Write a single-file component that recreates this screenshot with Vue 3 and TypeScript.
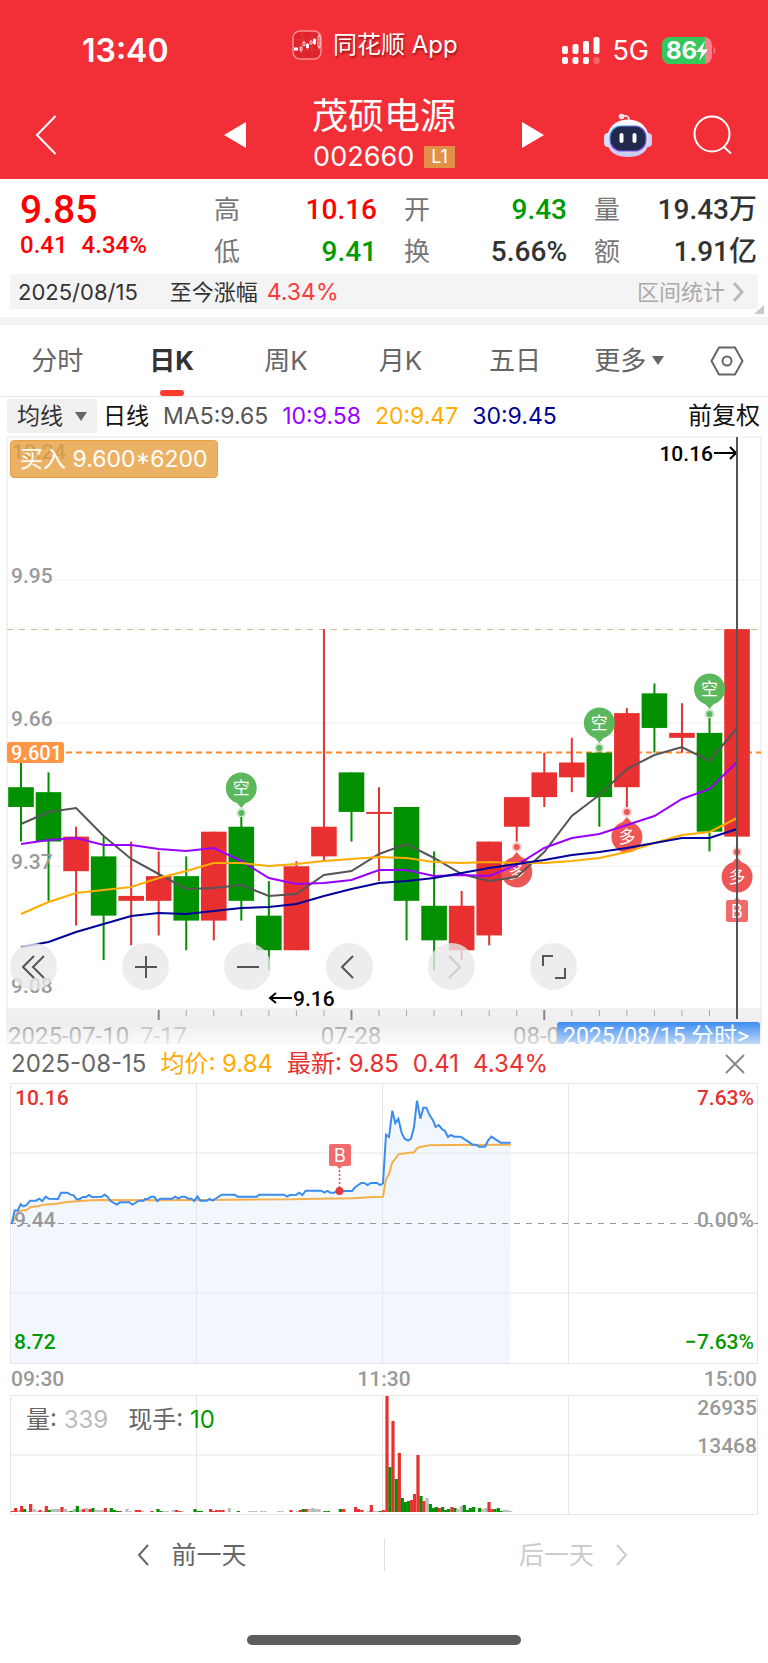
<script setup lang="ts">
type Point = [number, number]
type Candle = [open: number, close: number, high: number, low: number]

const quotes = [
  { label: '高', value: '10.16', tone: 'up' },
  { label: '开', value: '9.43', tone: 'down' },
  { label: '量', value: '19.43万', tone: '' },
  { label: '低', value: '9.41', tone: 'down' },
  { label: '换', value: '5.66%', tone: '' },
  { label: '额', value: '1.91亿', tone: '' },
]

const tabs = ['分时', '日K', '周K', '月K', '五日']

const averages = [
  { text: 'MA5:9.65', tone: 'ma5' },
  { text: '10:9.58', tone: 'ma10' },
  { text: '20:9.47', tone: 'ma20' },
  { text: '30:9.45', tone: 'ma30' },
]

// Daily candles
const candles: Candle[] = [
  [9.53, 9.49, 9.58, 9.42], [9.52, 9.42, 9.56, 9.3], [9.36, 9.43, 9.45, 9.25],
  [9.39, 9.27, 9.43, 9.18], [9.3, 9.31, 9.42, 9.21], [9.3, 9.35, 9.4, 9.23],
  [9.35, 9.26, 9.39, 9.2], [9.26, 9.44, 9.44, 9.22], [9.45, 9.3, 9.47, 9.26],
  [9.27, 9.2, 9.34, 9.16], [9.2, 9.37, 9.38, 9.2], [9.39, 9.45, 9.85, 9.38],
  [9.56, 9.48, 9.56, 9.42], [9.48, 9.48, 9.53, 9.34], [9.49, 9.3, 9.49, 9.22],
  [9.29, 9.22, 9.4, 9.16], [9.2, 9.29, 9.32, 9.18], [9.23, 9.42, 9.42, 9.21],
  [9.45, 9.51, 9.51, 9.42], [9.51, 9.56, 9.6, 9.49], [9.55, 9.58, 9.63, 9.52],
  [9.6, 9.51, 9.6, 9.45], [9.53, 9.68, 9.69, 9.49], [9.72, 9.65, 9.74, 9.6],
  [9.63, 9.64, 9.7, 9.6], [9.64, 9.44, 9.67, 9.4], [9.43, 9.85, 10.16, 9.41],
]
const cx = (i: number) => 21 + i * 27.54
const py = (price: number) => 288 + (9.66 - price) * 494
const bars = candles.map(([open, close, high, low], i) => {
  const top = py(Math.max(open, close))
  return {
    x: cx(i),
    top,
    height: Math.max(2, py(Math.min(open, close)) - top),
    high: py(high),
    low: py(low),
    tone: close >= open ? 'rise' : 'fall',
  }
})

const line = (ys: number[]) => ys.map((y, i) => `${cx(i)},${y}`).join(' ')
const maLines = [
  { tone: 'ma5', points: line([389, 377, 373, 401, 424, 439, 454, 453, 450, 461, 459, 440, 436, 419, 409, 423, 439, 446, 442, 417, 381, 360, 334, 320, 312, 326, 293]) },
  { tone: 'ma10', points: line([409, 405, 403, 410, 410, 414, 416, 413, 426, 443, 449, 448, 445, 435, 435, 441, 440, 441, 430, 413, 403, 399, 390, 381, 364, 354, 327]) },
  { tone: 'ma20', points: line([479, 467, 458, 455, 452, 443, 436, 428, 428, 431, 429, 426, 424, 422, 423, 427, 428, 427, 428, 428, 426, 423, 417, 408, 400, 397, 383]) },
  { tone: 'ma30', points: line([512, 507, 497, 489, 481, 478, 479, 476, 473, 472, 469, 461, 454, 448, 446, 443, 438, 433, 429, 425, 420, 417, 413, 408, 403, 403, 394]) },
]

const shortPins = [{ i: 8, y: 353 }, { i: 21, y: 288 }, { i: 25, y: 254 }]
const longPins = [{ i: 18, y: 437 }, { i: 22, y: 402 }, { i: 26, y: 442 }]
const ticks = Array.from({ length: 21 }, (_, k) => k + 5)

// Intraday series, three units to a pixel
const price: Point[] = [
  [35, 553], [44, 512], [53, 513], [62, 494], [71, 500], [80, 496], [90, 483], [108, 483], [118, 477], [127, 484],
  [137, 471], [146, 477], [174, 478], [183, 459], [202, 459], [212, 465], [221, 467], [230, 479], [239, 478],
  [248, 472], [258, 472], [267, 466], [276, 472], [305, 471], [314, 465], [323, 472], [332, 484], [350, 495],
  [360, 488], [388, 488], [397, 495], [406, 490], [416, 483], [430, 483], [435, 478], [445, 477], [453, 471],
  [463, 471], [472, 484], [481, 477], [516, 477], [526, 471], [535, 477], [545, 471], [555, 471], [565, 477],
  [574, 477], [583, 484], [592, 470], [601, 483], [620, 483], [629, 478], [638, 483], [665, 465], [704, 465],
  [713, 471], [770, 471], [778, 465], [852, 465], [861, 471], [870, 466], [889, 465], [898, 459], [907, 466],
  [917, 453], [964, 453], [973, 459], [982, 454], [991, 459], [1003, 459], [1012, 454], [1056, 454], [1067, 441],
  [1084, 430], [1093, 430], [1103, 436], [1112, 430], [1131, 430], [1140, 436], [1149, 431], [1158, 285],
  [1167, 292], [1177, 213], [1186, 250], [1195, 237], [1205, 280], [1214, 297], [1224, 303], [1233, 297],
  [1242, 262], [1251, 183], [1261, 237], [1270, 204], [1279, 204], [1289, 227], [1298, 240], [1307, 262],
  [1316, 256], [1326, 268], [1335, 274], [1344, 292], [1353, 286], [1363, 291], [1382, 291], [1400, 303],
  [1418, 315], [1428, 315], [1438, 321], [1455, 321], [1464, 303], [1474, 291], [1502, 309], [1532, 309],
]
const average: Point[] = [
  [35, 553], [44, 537], [55, 514], [80, 511], [92, 502], [118, 499], [130, 495], [170, 492], [200, 487],
  [240, 484], [290, 481], [480, 482], [700, 480], [880, 479], [950, 477], [1060, 476], [1120, 472], [1149, 471],
  [1158, 418], [1167, 403], [1177, 368], [1186, 358], [1195, 344], [1205, 342], [1242, 338], [1251, 326],
  [1261, 322], [1289, 317], [1344, 316], [1532, 315],
]
const poly = (pts: Point[]) => pts.map(([x, y]) => `${x / 3},${(y - 130) / 3}`).join(' ')
const pricePoints = poly(price)
const averagePoints = poly(average)
const areaPoints = `${pricePoints} 510,280 11,280`

// Volume bars: r = rise, g = fall, n = flat; then position and height
const volume = (
  'r37:1 r47:4 n56:2 r65:6 g74:3 n84:1 r92:8 n102:3 n111:1 r120:2 n130:1 r139:6 g148:2 n158:3 n167:3 n176:3 r186:5 n196:3 ' +
  'n204:1 g214:1 n223:3 g232:6 n242:2 r251:3 n260:4 r270:3 g279:4 n288:2 n297:2 n306:2 r316:4 n325:1 g334:4 g343:2 g352:1 ' +
  'r361:1 n381:3 n391:1 r409:2 r419:2 n428:1 r456:1 g474:3 g483:1 n492:1 n502:1 n520:2 r530:2 r540:1 n548:1 g585:3 g595:1 ' +
  'g604:1 r632:3 r641:1 r650:2 r660:2 r669:2 n688:4 g715:1 n750:1 n759:1 n768:1 n785:1 n795:1 n836:1 n846:1 r873:2 n892:1 ' +
  'r901:2 g910:3 r919:3 n928:3 n938:4 n947:3 n957:3 g975:1 g985:1 g1021:3 r1031:3 r1067:5 r1076:3 r1086:2 n1105:1 r1114:7 ' +
  'n1123:1 n1133:1 g1142:1 r1151:2 r1161:116 g1170:45 r1179:91 g1189:33 r1198:59 g1207:14 g1216:10 g1226:11 r1235:12 ' +
  'r1244:18 r1254:57 g1263:16 r1272:11 n1281:14 g1291:8 g1300:4 g1309:5 r1318:4 g1328:5 g1337:2 g1346:3 r1356:5 g1365:4 ' +
  'n1374:3 n1384:6 g1393:7 g1402:2 g1411:4 g1421:5 g1439:4 n1448:3 n1458:4 r1467:10 r1476:3 g1485:3 g1495:4 g1504:1 ' +
  'n1513:2 n1522:2 n1532:1'
).split(' ').map((item) => {
  const [x, h] = item.slice(1).split(':').map(Number)
  return { tone: item[0], x: x / 3 - 1.6, h }
})
</script>

<template>
  <main class="page">
    <header class="top">
      <div class="status">
        <time class="clock">13:40</time>
        <div class="source">
          <svg class="app-icon" viewBox="0 0 30 30" aria-hidden="true">
            <rect x="1" y="1" width="28" height="28" rx="7" fill="#e0242b" stroke="#fb9095" stroke-width="1.5" />
            <path d="M1 10h28M1 20h28M10 1v28M20 1v28" stroke="#ef4a50" stroke-width=".5" />
            <path d="M2 17.500h4v3H2zM14 14h3v4h-3zM21 9h3v5h-3z" fill="#fff" />
            <path d="M8 17h2v3H8zM11 12.500h2v3h-2zM18 11h2v3h-2zM26 6h2v11h-2zM9 20v2M12 11v1M15.500 13v6M22.500 8v7M27 4v2M27 17v2" fill="none" stroke="#fff" stroke-width=".8" />
          </svg>
          <span>同花顺 App</span>
        </div>
        <div class="signals">
          <svg class="bars" viewBox="0 0 38 28" aria-hidden="true">
            <g fill="#fff">
              <rect x="0" y="9" width="6" height="8" rx="2" /><rect x="10.500" y="7" width="6" height="10" rx="2" />
              <rect x="21" y="4" width="6" height="13" rx="2" /><rect x="31.500" y="0" width="6" height="17" rx="2" />
              <rect x="0" y="20" width="6" height="7" rx="2" /><rect x="10.500" y="20" width="6" height="7" rx="2" />
              <rect x="21" y="20" width="6" height="7" rx="2" /><rect x="31.500" y="20" width="6" height="7" rx="2" opacity=".25" />
            </g>
          </svg>
          <span class="network">5G</span>
          <svg class="battery" viewBox="0 0 54 28" role="img" aria-label="86">
            <path d="M8 0h34a8 8 0 0 1 8 8v11a8 8 0 0 1-8 8H8a8 8 0 0 1-8-8V8a8 8 0 0 1 8-8z" fill="#f9808a" />
            <path d="M8 0h35v27H8a8 8 0 0 1-8-8V8a8 8 0 0 1 8-8z" fill="#34c759" />
            <path d="M51.500 9.500c2.500 1.500 2.500 6.500 0 8z" fill="#f9707a" />
            <text x="4" y="22" class="battery-text">86</text>
            <path d="M43 4 34 15h5.500L37 24l9-11.500h-5.500z" fill="#fff" />
          </svg>
        </div>
      </div>
      <nav class="nav">
        <button class="icon-btn back" aria-label="返回">
          <svg viewBox="0 0 22 40"><path d="M20.500 1 2 20l18.500 19" /></svg>
        </button>
        <div class="stock">
          <button class="icon-btn step" aria-label="上一只"><svg viewBox="0 0 22 26"><path d="M22 0v26L0 13z" /></svg></button>
          <div class="title">
            <h1>茂硕电源</h1>
            <p>002660 <span class="level">L1</span></p>
          </div>
          <button class="icon-btn step" aria-label="下一只"><svg viewBox="0 0 22 26"><path d="M0 0v26l22-13z" /></svg></button>
        </div>
        <div class="actions">
          <button class="icon-btn robot" aria-label="助手">
            <svg viewBox="0 0 48 44">
              <defs>
                <linearGradient id="shell" x1="0" y1="0" x2="0" y2="1"><stop offset="0" stop-color="#fff" /><stop offset="1" stop-color="#c9c6f0" /></linearGradient>
                <linearGradient id="rim" x1="0" y1="0" x2="1" y2="1"><stop offset="0" stop-color="#39b8e8" /><stop offset=".5" stop-color="#8b4df0" /><stop offset="1" stop-color="#6f5be8" /></linearGradient>
              </defs>
              <path d="M18 3.500c4-1.500 7-.5 7 4" fill="none" stroke="#f5dfe8" stroke-width="1.600" />
              <circle cx="17.500" cy="3.500" r="2.800" fill="#f3e3ee" />
              <rect x="0" y="20" width="8" height="14" rx="4" fill="#dcdcf8" />
              <rect x="40" y="20" width="8" height="14" rx="4" fill="#d0cef4" />
              <path d="M24 6.500C37 6.500 45 15 45 27c0 11-8 17-21 17S3 38 3 27C3 15 11 6.500 24 6.500z" fill="url(#shell)" />
              <rect x="6" y="13" width="36" height="25" rx="11" fill="#20284c" stroke="url(#rim)" stroke-width="1.200" />
              <rect x="15.500" y="20" width="4" height="10" rx="2" fill="#fff" />
              <rect x="28.500" y="20" width="4" height="10" rx="2" fill="#fff" />
            </svg>
          </button>
          <button class="icon-btn search" aria-label="搜索">
            <svg viewBox="0 0 40 40"><circle cx="19" cy="19" r="17.500" /><path d="m31 32 7 6.500" /></svg>
          </button>
        </div>
      </nav>
    </header>

    <section class="quote">
      <div class="last">
        <strong>9.85</strong>
        <p><span>0.41</span><span>4.34%</span></p>
      </div>
      <dl class="stats">
        <div v-for="q in quotes" :key="q.label">
          <dt>{{ q.label }}</dt>
          <dd :class="q.tone">{{ q.value }}</dd>
        </div>
      </dl>
    </section>

    <section class="range">
      <time>2025/08/15</time>
      <span class="since">至今涨幅</span>
      <span class="change">4.34%</span>
      <a class="range-link" href="#range">区间统计
        <svg viewBox="0 0 12 20" aria-hidden="true"><path d="m2 1 8 9-8 9" /></svg>
      </a>
      <svg class="corner" viewBox="0 0 10 9" aria-hidden="true"><path d="M10 0v9H0z" /></svg>
    </section>

    <nav class="tabs">
      <button v-for="t in tabs" :key="t" :class="{ active: t === '日K' }">{{ t }}</button>
      <button class="more">更多<svg viewBox="0 0 12 9" aria-hidden="true"><path d="M0 0h12L6 9z" /></svg></button>
      <button class="settings" aria-label="设置">
        <svg viewBox="0 0 34 30"><path d="M9 1.500h16L32.500 15 25 28.500H9L1.500 15z" /><circle cx="17" cy="15" r="4.500" /></svg>
      </button>
    </nav>

    <div class="indicators">
      <button class="pill">均线<svg viewBox="0 0 12 9" aria-hidden="true"><path d="M0 0h12L6 9z" /></svg></button>
      <span class="period">日线</span>
      <span v-for="m in averages" :key="m.tone" :class="m.tone">{{ m.text }}</span>
      <button class="adjust">前复权</button>
    </div>

    <section class="daily">
      <svg class="chart" viewBox="0 0 768 609" role="img" aria-label="日K">
        <defs>
          <linearGradient id="axis" x1="0" y1="0" x2="0" y2="1"><stop offset="0" stop-color="#f3f3f3" /><stop offset=".5" stop-color="#ececec" /><stop offset="1" stop-color="#f7f7f7" /></linearGradient>
          <linearGradient id="fade" x1="0" y1="0" x2="0" y2="1"><stop offset="0" stop-color="#fff" stop-opacity="0" /><stop offset="1" stop-color="#fafafa" stop-opacity=".7" /></linearGradient>
        </defs>
        <rect x="7" y="574" width="754" height="35" fill="url(#axis)" />
        <path class="grid" d="M7 145h754M7 288h754M7 431h754" />
        <path class="frame" d="M7 609V2h754v607M7 574h754" />
        <line class="high-line" x1="7" y1="194.500" x2="761" y2="194.500" />
        <line class="cost-line" x1="66" y1="317.500" x2="761" y2="317.500" />

        <g v-for="(b, i) in bars" :key="i" :class="b.tone">
          <rect :x="b.x - 1" :y="b.high" width="2" :height="b.low - b.high" />
          <rect :x="b.x - 12.8" :y="b.top" width="25.600" :height="b.height" />
        </g>

        <g v-for="p in shortPins" :key="p.i" class="pin short" :transform="`translate(${cx(p.i)} ${p.y})`">
          <path d="M-6 13 0 20l6-7z" /><circle r="15.500" />
          <circle cy="25" r="5" class="halo" /><circle cy="25" r="3" />
          <text y="6">空</text>
        </g>
        <g v-for="p in longPins" :key="p.i" class="pin long" :transform="`translate(${cx(p.i)} ${p.y})`">
          <path d="M-6-13 0-20l6 7z" /><circle r="15.500" />
          <circle cy="-25" r="5" class="halo" /><circle cy="-25" r="3" />
          <text y="6">多</text>
        </g>
        <g class="mark">
          <path d="m733 466 4-4 4 4z" /><rect x="726" y="465" width="22" height="22" rx="2" />
          <text x="737" y="483">B</text>
        </g>

        <polyline v-for="m in maLines" :key="m.tone" class="ma" :class="m.tone" :points="m.points" />

        <g class="label">
          <text x="12" y="24">10.24</text>
          <text x="11" y="148">9.95</text>
          <text x="11" y="291">9.66</text>
          <text x="11" y="434">9.37</text>
          <text x="11" y="558">9.08</text>
        </g>
        <rect x="7" y="307" width="57" height="21" rx="3" fill="#ff9545" />
        <text x="11" y="325" class="cost">9.601</text>

        <g class="extreme">
          <text x="713" y="26" text-anchor="end">10.16</text>
          <path d="M714 18h22m-6-6 6 6-6 6" />
          <text x="293" y="571">9.16</text>
          <path d="M292 563h-22m6-5-6 5 6 5" />
        </g>

        <path class="tick" :d="ticks.map((i) => `M${cx(i)} 575v6`).join('')" />
        <path class="tick major" :d="[5, 12, 19].map((i) => `M${cx(i)} 575v10`).join('')" />
        <path class="cross" d="M737 2v582" />
        <g class="label date">
          <text x="8" y="609">2025-07-10</text>
          <text x="140" y="609" opacity=".6">7-17</text>
          <text x="351" y="609" text-anchor="middle">07-28</text>
          <text x="513" y="609">08-0</text>
        </g>
        <path d="M560 587h197q3 0 3 3v19H557v-19q0-3 3-3z" fill="#3b8cf0" />
        <text x="563" y="609" class="day-link">2025/08/15 分时&gt;</text>
        <rect x="0" y="587" width="768" height="22" fill="url(#fade)" />
      </svg>
      <div class="trade">买入 9.600*6200</div>
      <div class="tools">
        <button class="tool first" aria-label="最早"><svg viewBox="0 0 24 24"><path d="M12 1 1 12l11 11M22 1 11 12l11 11" /></svg></button>
        <button class="tool" aria-label="放大"><svg viewBox="0 0 24 24"><path d="M12 1v22M1 12h22" /></svg></button>
        <button class="tool" aria-label="缩小"><svg viewBox="0 0 24 24"><path d="M1 12h22" /></svg></button>
        <button class="tool" aria-label="向前"><svg viewBox="0 0 24 24"><path d="M15 1 4 12l11 11" /></svg></button>
        <button class="tool" aria-label="向后" disabled><svg viewBox="0 0 24 24"><path d="m9 1 11 11L9 23" /></svg></button>
        <button class="tool" aria-label="全屏"><svg viewBox="0 0 24 24"><path d="M1 11V1h10M23 13v10H13" /></svg></button>
      </div>
    </section>

    <section class="intraday">
      <div class="summary">
        <time>2025-08-15</time>
        <span class="avg">均价: 9.84</span>
        <span class="now">最新: 9.85</span>
        <span class="now">0.41</span>
        <span class="now">4.34%</span>
        <button class="icon-btn close" aria-label="关闭"><svg viewBox="0 0 20 20"><path d="m1 1 18 18M19 1 1 19" /></svg></button>
      </div>
      <svg class="chart" viewBox="0 0 768 281" role="img" aria-label="分时">
        <polygon :points="areaPoints" fill="#f2f7fe" />
        <path class="frame" d="M10.500.5h747v280h-747zM10.500 70h747M10.500 210h747M196.500 0v280M382.500 0v280M568.500 0v280" />
        <path class="zero" d="M10 140.500h748" />
        <polyline class="avg-line" :points="averagePoints" />
        <polyline class="price-line" :points="pricePoints" />
        <path d="M339.500 83v22" stroke="#e84a52" stroke-width="1.500" stroke-dasharray="2 2" />
        <circle cx="339.500" cy="108" r="4" fill="#e33a42" />
        <g class="mark">
          <path d="m335.500 82 4 4 4-4z" /><rect x="329" y="61" width="22" height="22" rx="2" />
          <text x="340" y="79">B</text>
        </g>
        <g class="scale">
          <text x="15" y="22" class="up">10.16</text>
          <text x="14" y="144">9.44</text>
          <text x="14" y="266" class="down">8.72</text>
          <g text-anchor="end">
            <text x="754" y="22" class="up">7.63%</text>
            <text x="754" y="144">0.00%</text>
            <text x="754" y="266" class="down">−7.63%</text>
          </g>
        </g>
      </svg>
      <div class="hours"><span>09:30</span><span>11:30</span><span>15:00</span></div>
      <div class="volume">
        <svg class="chart" viewBox="0 0 768 121" role="img" aria-label="成交量">
          <path class="frame" d="M10.500.5h747v119h-747zM10.500 60h747M196.500 0v120M382.500 0v120M568.500 0v120" />
          <rect v-for="(v, i) in volume" :key="i" :class="v.tone" :x="v.x" :y="117 - v.h" width="3.200" :height="v.h" />
          <g class="scale" text-anchor="end">
            <text x="757" y="20">26935</text>
            <text x="757" y="58">13468</text>
          </g>
        </svg>
        <p class="legend"><span>量: <i>339</i></span><span>现手: <b>10</b></span></p>
      </div>
    </section>

    <nav class="days">
      <button><svg viewBox="0 0 12 22"><path d="M11 1 2 11l9 10" /></svg>前一天</button>
      <button disabled>后一天<svg viewBox="0 0 12 22"><path d="m1 1 9 10-9 10" /></svg></button>
    </nav>
    <div class="home"></div>
  </main>
</template>

<style>
body {
  margin: 0;
  background: #fff;
}
</style>

<style scoped>
.page {
  font-family: Inter, "Noto Sans CJK SC", sans-serif;
  color: #333;
  font-size: 23px;
  line-height: 32px;
}
.page * { box-sizing: border-box; }
button {
  padding: 0;
  border: 0;
  background: none;
  color: inherit;
  font: inherit;
}
p, h1, dl, dd { margin: 0; }
svg { display: block; }
.chart { width: 100%; height: auto; }

.top { background: #f22f37; color: #fff; height: 179px; }
.status {
  height: 78px;
  padding: 24px 52px 0 82px;
  display: grid;
  grid-template-columns: 1fr auto 1.23fr;
}
.clock { font-size: 32px; font-weight: 600; line-height: 54px; }
.source {
  display: flex;
  align-items: center;
  gap: 11px;
  height: 42px;
  font-size: 24px;
  text-shadow: 1px 2px 2px rgba(90, 0, 0, 0.6);
}
.app-icon { width: 30px; height: 30px; }
.signals { display: flex; align-items: center; justify-content: flex-end; height: 54px; }
.bars { width: 38px; height: 28px; }
.network { font-size: 27px; margin: 0 13px 0 12px; }
.battery { width: 54px; height: 28px; }
.battery-text { font: 700 24px Inter, sans-serif; fill: #fff; }
.nav {
  height: 101px;
  padding: 12px 35px 0;
  display: grid;
  grid-template-columns: 1fr 320px 1fr;
  align-items: center;
}
.icon-btn svg { fill: none; stroke: currentColor; }
.back svg { width: 22px; height: 40px; stroke-width: 2; }
.stock { display: flex; align-items: center; justify-content: space-between; }
.step svg { width: 22px; height: 26px; fill: #fff; stroke: none; }
.title { text-align: center; }
.title h1 { font-size: 36px; font-weight: 400; line-height: 44px; }
.title p { display: flex; align-items: center; justify-content: center; gap: 10px; font-size: 27px; line-height: 38px; }
.level { padding: 0 7px; background: #e29048; font-size: 18px; line-height: 22px; }
.actions { display: flex; align-items: center; justify-content: flex-end; gap: 41px; }
.robot svg { width: 48px; height: 44px; stroke: none; }
.search svg { width: 40px; height: 40px; stroke-width: 2; }

.quote {
  display: grid;
  grid-template-columns: 184px 1fr;
  gap: 10px;
  padding: 10px 11px 1px 20px;
}
.last { color: #f00; font-family: Roboto, sans-serif; font-weight: 500; }
.last strong { display: block; font-size: 39px; font-weight: 500; line-height: 42px; }
.last p { display: flex; gap: 14px; font-size: 24px; line-height: 28px; }
.stats { display: grid; grid-template-columns: repeat(3, 1fr); column-gap: 27px; grid-auto-rows: 42px; }
.stats div { display: flex; justify-content: space-between; align-items: center; }
dt { font-size: 26px; color: #777; }
dd { font-family: Roboto, "Noto Sans CJK SC", sans-serif; font-size: 28px; font-weight: 500; }
dd.up { color: #f00; }
dd.down { color: #090; }

.range {
  position: relative;
  display: flex;
  align-items: center;
  height: 35px;
  margin: 0 10px 8px;
  padding: 0 14px 0 8px;
  background: #f4f4f4;
  font-size: 22px;
}
.since { margin-left: 32px; }
.change { margin-left: 9px; color: #fb3b3b; font-size: 23px; }
.range-link {
  display: flex;
  align-items: center;
  gap: 7px;
  margin-left: auto;
  color: #aaa;
  text-decoration: none;
}
.range-link svg { width: 12px; height: 20px; fill: none; stroke: #bbb; stroke-width: 3; }
.corner { position: absolute; right: -6px; bottom: -5px; width: 10px; height: 9px; fill: #c8c8c8; }

.tabs {
  display: grid;
  grid-template-columns: repeat(6, 149fr) 106fr;
  height: 80px;
  border-top: 8px solid #f4f4f4;
  border-bottom: 1px solid #e8e8e8;
  color: #666;
  font-size: 26px;
}
.tabs button { position: relative; display: flex; align-items: center; justify-content: center; }
.tabs .active { color: #333; font-weight: 700; }
.tabs .active::after {
  content: "";
  position: absolute;
  bottom: 0;
  width: 24px;
  height: 6px;
  border-radius: 3px;
  background: #ff3a30;
}
.more { gap: 6px; }
.more svg, .pill svg { width: 12px; height: 9px; fill: #666; }
.settings svg { width: 34px; height: 30px; fill: none; stroke: #666; stroke-width: 2; }

.indicators {
  display: flex;
  align-items: center;
  gap: 14px;
  height: 38px;
  padding: 0 8px 0 7px;
  font-size: 23px;
}
.pill {
  display: flex;
  align-items: center;
  gap: 12px;
  height: 34px;
  padding: 0 10px;
  border-radius: 4px;
  background: #f0f0f0;
}
.period, .adjust { color: #111; }
.period { margin-left: -8px; }
.adjust { margin-left: auto; font-size: 24px; }
.ma5 { color: #555; stroke: #555; }
.ma10 { color: #90f; stroke: #90f; }
.ma20 { color: #ffab00; stroke: #ffab00; }
.ma30 { color: #009; stroke: #009; }
span.ma5, span.ma10, span.ma20, span.ma30 { stroke: none; }

.daily { position: relative; }
.grid { stroke: #eee; stroke-width: 1; fill: none; }
.frame { stroke: #e6e6e6; stroke-width: 1; fill: none; }
.high-line { stroke: #dcb98c; stroke-width: 1; stroke-dasharray: 6 6; }
.cost-line { stroke: #ff8a2b; stroke-width: 2; stroke-dasharray: 6 4; }
.rise { fill: #e83030; }
.fall { fill: #009000; }
.pin text, .mark text { text-anchor: middle; fill: #fff; }
.pin text { font-size: 17px; }
.mark text { font-size: 18px; }
.short { fill: #5cb85c; }
.long { fill: #ee5555; }
.pin .halo { opacity: 0.3; }
.mark { fill: #f06c6c; }
.ma { fill: none; stroke-width: 2; }
.label { font: 500 21px Roboto, sans-serif; fill: #999; }
.label.date { font-size: 24px; font-weight: 400; }
.cost { font: 500 20px Roboto, sans-serif; fill: #fff; }
.extreme { font: 500 21px Roboto, sans-serif; fill: #000; }
.extreme path { fill: none; stroke: #000; stroke-width: 2; }
.tick { stroke: #aaa; stroke-width: 1; }
.major { stroke: #888; stroke-width: 2; }
.cross { stroke: #555; stroke-width: 2; }
.day-link { font: 23px Roboto, "Noto Sans CJK SC", sans-serif; fill: #fff; }
.trade {
  position: absolute;
  left: 10px;
  top: 5px;
  padding: 2px 9px;
  border: 1px solid #e8a040;
  border-radius: 4px;
  background: rgba(229, 156, 58, 0.78);
  color: #fff;
}
.tools { position: absolute; left: 10px; bottom: 54px; display: flex; gap: 55px; }
.tool {
  display: flex;
  align-items: center;
  justify-content: center;
  width: 47px;
  height: 47px;
  border-radius: 50%;
  background: rgba(232, 232, 232, 0.8);
}
.first { margin-right: 10px; }
.tool svg { width: 24px; height: 24px; fill: none; stroke: #555; stroke-width: 2; }
.tool:disabled svg { stroke: #ccc; }

.summary { display: flex; align-items: center; gap: 14px; height: 39px; padding: 0 23px 0 11px; font-size: 24px; }
.summary time { color: #666; }
.avg { color: #ffab00; }
.now { color: #e83030; }
.close { margin-left: auto; color: #888; }
.close svg { width: 20px; height: 20px; stroke-width: 2; }
.zero { stroke: #999; stroke-width: 1; stroke-dasharray: 6 6; }
.avg-line { fill: none; stroke: #f5b04c; stroke-width: 2; }
.price-line { fill: none; stroke: #3b8cf0; stroke-width: 2; }
.scale { font: 500 21px Roboto, sans-serif; fill: #999; }
.scale .up { fill: #e83030; }
.scale .down { fill: #090; }
.hours {
  display: grid;
  grid-template-columns: 1fr auto 1fr;
  padding: 0 11px;
  color: #999;
  font: 500 21px/31px Roboto, sans-serif;
}
.hours span:last-child { text-align: right; }
.volume { position: relative; }
.r { fill: #e83030; }
.g { fill: #009000; }
.n { fill: #bbb; }
.legend { position: absolute; left: 26px; top: 9px; display: flex; gap: 20px; color: #666; font-size: 24px; }
.legend i { color: #bbb; font-style: normal; }
.legend b { color: #090; font-weight: 400; }

.days { display: grid; grid-template-columns: 1fr 1fr; height: 119px; padding-top: 23px; align-items: start; }
.days button {
  display: flex;
  align-items: center;
  justify-content: center;
  gap: 22px;
  height: 32px;
  color: #666;
  font-size: 25px;
}
.days button:last-child { padding-right: 6px; border-left: 1px solid #ddd; }
.days button:disabled { color: #ccc; }
.days svg { width: 12px; height: 22px; fill: none; stroke: currentColor; stroke-width: 2; }
.home { width: 274px; height: 10px; margin: 0 auto 17px; border-radius: 5px; background: #5c5c5c; }
</style>
